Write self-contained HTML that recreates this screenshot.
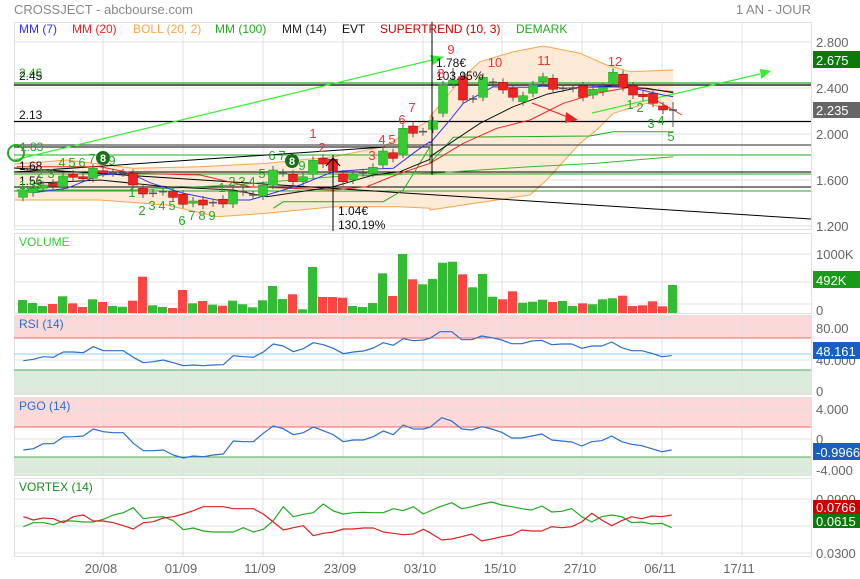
<!DOCTYPE html>
<html><head><meta charset="utf-8"><style>
html,body{margin:0;padding:0;background:#fff;width:860px;height:579px;overflow:hidden}
svg{display:block;font-family:"Liberation Sans",sans-serif}
</style></head><body>
<svg id="s" width="860" height="579" viewBox="0 0 860 579" xmlns="http://www.w3.org/2000/svg">
<rect width="860" height="579" fill="#fff"/>
<text x="14" y="14" font-size="13" fill="#888">CROSSJECT - abcbourse.com</text>
<text x="811" y="14" font-size="13" fill="#888" text-anchor="end">1 AN - JOUR</text>
<g id="g"></g>
</svg>
<script>
var g=document.getElementById('g'),h='';
function L(x1,y1,x2,y2,c,w){h+='<line x1="'+x1+'" y1="'+y1+'" x2="'+x2+'" y2="'+y2+'" stroke="'+c+'" stroke-width="'+(w||1)+'"/>';}
function R(x,y,w,hh,c,e){h+='<rect x="'+x+'" y="'+y+'" width="'+w+'" height="'+hh+'" fill="'+c+'" '+(e||'')+'/>';}
function T(x,y,t,c,s,a){h+='<text x="'+x+'" y="'+y+'" font-size="'+(s||12)+'" fill="'+c+'"'+(a?' text-anchor="'+a+'"':'')+'>'+t+'</text>';}
function cvt(a,ox,oy){return a.map(function(p){return [p[0]/3+ox,p[1]/3+oy]});}
function PP(a1,a2,c,w,oy){var pts=cvt(a1,0,oy||0).concat(cvt(a2,430,oy||0));var s=pts.map(function(p){return p[0].toFixed(1)+','+p[1].toFixed(1)}).join(' ');h+='<polyline points="'+s+'" fill="none" stroke="'+c+'" stroke-width="'+(w||1)+'" stroke-linejoin="round"/>';}
var VX=[103,183,263,343,423,502,582,662,742];
var panels=[[22,229],[233,313],[315,394],[397,475],[478,556]];
R(14,316,797,22,'#fdd8d8');R(14,370,797,24,'#dcecdc');
R(14,398,797,29,'#fdd8d8');R(14,457,797,18,'#dcecdc');
[42,88,134,180,226,254,282,304,328,360,392,409,439,470,499,526,553].forEach(function(y){L(14,y,811,y,'#e0e0e0');});
VX.forEach(function(x){panels.forEach(function(p){L(x,p[0],x,p[1],'#e0e0e0');});});
panels.forEach(function(p){h+='<rect x="14.5" y="'+(p[0]+.5)+'" width="797" height="'+(p[1]-p[0])+'" fill="none" stroke="#e0e0e0"/>';});
L(14,338,811,338,'#e66');L(14,370,811,370,'#5a5');L(14,354,811,354,'#8cf');
L(14,427,811,427,'#e66');L(14,457,811,457,'#5a5');
var bu1=[[45,492],[200,480],[400,505],[600,500],[800,490],[1000,470],[1150,440],[1290,360]],bu2=[[0,350],[100,230],[150,185],[250,155],[340,138],[450,160],[530,195],[600,215],[730,210]];
var bl1=[[45,600],[300,600],[500,615],[650,650],[800,640],[1000,620],[1200,620],[1290,625]],bl2=[[0,630],[200,600],[300,585],[350,540],[450,430],[500,390],[550,340],[650,310],[730,330]];
var up=cvt(bu1,0,0).concat(cvt(bu2,430,0)),lo=cvt(bl1,0,0).concat(cvt(bl2,430,0));
var poly=up.concat(lo.slice().reverse()).map(function(p){return p[0].toFixed(1)+','+p[1].toFixed(1)}).join(' ');
h+='<polygon points="'+poly+'" fill="#fdebd7"/>';
PP(bu1,bu2,'#f5a64a',1);PP(bl1,bl2,'#f5a64a',1);
L(14,83,811,83,'#2a2',1.2);L(14,85,811,85,'#000',1.2);L(14,121.5,811,121.5,'#000',1.2);
L(14,145,811,145,'#555',1.2);L(14,155,811,155,'#2a2',1);L(14,172,811,172,'#000',1);
L(14,174,811,174,'#2a2',1);L(14,187,811,187,'#000',1);L(14,191,811,191,'#2a2',1);
L(14,168,811,219,'#000',1);L(14,172,385,147,'#000',1);L(14,147,430,147,'#000',1);
L(14,160,432,60,'#3e3',1.2);h+='<polygon points="430,55 444,57 433,65" fill="#3e3"/>';
L(592,113,760,74,'#3e3',1.2);h+='<polygon points="760,69 771,71 761,79" fill="#3e3"/>';
L(532,103,570,118,'#e22',1.2);h+='<polygon points="566,112 578,120 565,123" fill="#e22"/>';
L(652,98,682,115,'#e22',1);
PP([[820,625],[850,605],[1150,605],[1210,570],[1290,440]],[[0,490],[70,412],[480,408],[550,395],[730,395]],'#2a2',1);
PP([[50,570],[400,570],[700,555],[1000,530],[1290,520]],[[0,520],[300,500],[500,490],[730,470]],'#3b3',1);
PP([[50,500],[300,500],[400,520],[600,525],[750,560],[1000,570],[1100,560],[1200,520],[1290,490]],[[0,490],[100,430],[200,385],[300,360],[400,310],[500,280],[600,262],[730,275]],'#e22',1);
PP([[100,550],[300,540],[500,560],[700,570],[800,590],[1000,560],[1120,525],[1200,515],[1290,478]],[[0,470],[60,430],[150,370],[250,320],[350,283],[450,262],[550,260],[650,265],[730,278]],'#111',1);
PP([[100,578],[200,565],[300,525],[390,520],[450,548],[550,580],[650,600],[750,600],[800,585],[900,555],[1000,515],[1100,508],[1180,505],[1260,445],[1290,425]],[[0,430],[60,360],[100,310],[190,260],[220,262],[300,262],[340,258],[400,265],[460,262],[540,258],[600,262],[700,285],[730,290]],'#33e',1);
var C=[['G',570,592],['G',565,578],['G',555,565],['R',550,558],['G',528,560],['R',522,532],['R',530,535],['G',505,535],['R',512,520],['X',518],['X',518],['R',520,555],['R',565,582],['X',580],['X',575],['R',575,592],['R',583,613],['G',603,610],['R',600,615],['X',608],['R',598,612],['G',575,612],['X',575],['X',585],['G',556,588],['G',510,556],['X',518],['R',523,545],['G',530,545],['G',481,523],['R',475,492],['R',478,512],['R',522,545],['G',522,540],['X',518],['G',502,520],['G',453,495],['R',458,475],['G',385,462],['R',378,400],['X',395],['G',362,388],
['G',255,340],['G',240,252],['R',230,300],['X',297],['G',232,292],['X',247],['R',247,270],['R',265,292],['G',287,305],['G',255,280],['G',230,245],['R',235,268],['X',265],['X',265],['R',258,292],['G',268,285],['G',262,275],['G',217,250],['R',223,262],['R',258,285],['R',283,290],['R',280,310],['R',318,330],['X',330]];
C.forEach(function(c,i){var x=23+10*i;var t=c[1]/3,b=(c[2]||c[1])/3;var wt=t-4,wb=b+4;if(i==65){wt=102;wb=127;}if(i==43){wt=68;}
L(x,wt.toFixed(1),x,wb.toFixed(1),'#555',1);
if(c[0]=='X'){L(x-4,t,x+4,t,'#555',1.5);}else{R(x-4.5,t.toFixed(1),9,Math.max(2,b-t).toFixed(1),c[0]=='G'?'#3c3':'#e22','stroke="'+(c[0]=='G'?'#292':'#a00')+'" stroke-width="0.5"');}});
L(333,155,333,231,'#000',1);h+='<polyline points="326,166 333,158 340,166" fill="none" stroke="#000"/>';
T(338,215,'1.04€','#111',12);T(338,229,'130.19%','#111',12);
L(432,22,432,175,'#000',1);L(420,172,445,172,'#000',1);
T(436,67,'1.78€','#111',12);T(436,80,'103.95%','#111',12);
T(19,77,'2.46','#2a2',12);T(19,80,'2.45','#111',12);T(19,119,'2.13','#111',12);
T(20,151,'1.83','#2a2',12);T(19,170,'1.68','#111',12);T(19,185,'1.56','#111',12);T(19,189,'1.55','#2a2',12);
h+='<circle cx="16" cy="153" r="8" fill="none" stroke="#2a2" stroke-width="2"/>';
h+='<circle cx="103" cy="158" r="7" fill="#1a6e1a"/><text x="103" y="162" font-size="11" font-weight="bold" fill="#fff" text-anchor="middle">8</text>';
h+='<circle cx="292" cy="161" r="7" fill="#1a6e1a"/><text x="292" y="165" font-size="11" font-weight="bold" fill="#fff" text-anchor="middle">8</text>';
var dg=[[40,178,'2'],[51,178,'3'],[62,167,'4'],[72,167,'5'],[82,167,'6'],[92,163,'7'],[112,165,'9'],[132,197,'1'],[142,215,'2'],[152,210,'3'],[162,210,'4'],[172,210,'5'],[182,225,'6'],[192,220,'7'],[202,220,'8'],[212,220,'9'],[222,192,'1'],[232,186,'2'],[242,186,'3'],[252,186,'4'],[262,178,'5'],[272,160,'6'],[282,160,'7'],[302,170,'9'],[630,109,'1'],[640,112,'2'],[651,128,'3'],[661,125,'4'],[671,141,'5']];
dg.forEach(function(d){T(d[0],d[1],d[2],'#2a2',13,'middle');});
var dr=[[313,138,'1'],[322,152,'2'],[372,160,'3'],[382,144,'4'],[392,144,'5'],[402,124,'6'],[412,112,'7'],[451,54,'9'],[441,78,'8'],[495,67,'10'],[544,65,'11'],[615,66,'12']];
dr.forEach(function(d){T(d[0],d[1],d[2],'#e33',13,'middle');});
var lg=[[19,'MM (7)','#33e'],[72,'MM (20)','#e22'],[133,'BOLL (20, 2)','#f5a64a'],[215,'MM (100)','#2a2'],[282,'MM (14)','#222'],[342,'EVT','#111'],[380,'SUPERTREND (10, 3)','#c00'],[516,'DEMARK','#2a2']];
lg.forEach(function(l){T(l[0],33,l[1],l[2],12);});
var V=[210,219,228,222,199,220,231,208,216,228,230,212,140,226,231,234,180,220,213,224,227,212,223,232,211,168,207,193,238,111,201,201,203,228,231,219,130,198,72,148,163,147,98,95,133,172,132,200,208,184,218,215,209,216,213,228,220,223,208,205,197,228,226,214,229,165];
V.forEach(function(v,i){var x=18+10*i,t=v/3+230;R(x,t.toFixed(1),9,(313-t).toFixed(1),C[i][0]=='R'?'#f44':'#3b3');});
T(19,246,'VOLUME','#3c3',12);
var r1=[[70,392],[100,388],[130,380],[160,382],[190,366],[220,366],[250,368],[280,350],[310,362],[340,362],[370,362],[400,382],[430,398],[460,395],[490,390],[520,398],[550,407],[580,405],[610,407],[640,405],[670,404],[700,377],[730,380],[760,382],[790,366],[820,342],[850,348],[880,365],[910,356],[940,338],[970,344],[1000,355],[1030,371],[1060,366],[1090,363],[1120,354],[1150,338],[1180,346],[1210,326],[1240,332],[1270,330]];
var r2=[[0,325],[30,305],[65,305],[95,329],[125,329],[155,318],[185,323],[215,330],[245,341],[275,341],[305,333],[335,331],[365,344],[395,342],[425,342],[455,355],[485,348],[515,348],[545,336],[575,353],[605,362],[635,362],[665,370],[695,380],[725,377]];
PP(r1,r2,'#2a6fd0',1.2,230);
T(19,328,'RSI (14)','#2a6fd0',12);
var p1=[[70,660],[100,656],[130,641],[160,641],[190,621],[220,620],[250,618],[280,597],[310,605],[340,608],[370,608],[400,640],[430,662],[460,662],[490,660],[520,675],[550,684],[580,678],[610,680],[640,675],[670,672],[700,633],[730,635],[760,635],[790,610],[820,588],[850,596],[880,614],[910,608],[940,591],[970,602],[1000,614],[1030,635],[1060,630],[1090,630],[1120,620],[1150,603],[1180,614],[1210,585],[1240,597],[1270,597]];
var p2=[[0,592],[35,563],[65,573],[95,597],[125,600],[155,590],[185,597],[215,607],[245,624],[275,624],[305,618],[335,612],[365,630],[395,633],[425,636],[455,648],[485,635],[515,632],[545,618],[575,635],[605,643],[635,647],[665,656],[695,665],[725,660]];
PP(p1,p2,'#2a6fd0',1.2,230);
T(19,410,'PGO (14)','#2a6fd0',12);
var vg1=[[70,890],[100,878],[130,878],[160,884],[190,873],[220,873],[250,876],[280,876],[310,868],[340,855],[370,848],[400,833],[430,866],[460,862],[490,860],[520,872],[550,899],[580,894],[610,903],[640,906],[670,906],[700,906],[730,893],[760,906],[790,898],[820,872],[850,830],[880,860],[910,853],[940,848],[970,822],[1000,843],[1030,852],[1060,848],[1090,847],[1120,848],[1150,848],[1180,836],[1210,842],[1240,830],[1270,852]];
var vg2=[[0,843],[30,830],[65,818],[95,836],[125,830],[155,822],[185,816],[215,825],[245,830],[275,836],[305,840],[335,828],[365,846],[395,844],[425,836],[455,860],[485,876],[515,860],[545,855],[575,860],[605,878],[635,876],[665,882],[695,880],[725,893]];
var vr1=[[70,860],[100,870],[130,864],[160,866],[190,878],[220,860],[250,855],[280,873],[310,873],[340,878],[370,887],[400,897],[430,878],[460,875],[490,864],[520,860],[550,852],[580,842],[610,830],[640,830],[670,830],[700,836],[730,836],[760,836],[790,852],[820,876],[850,900],[880,893],[910,887],[940,917],[970,910],[1000,906],[1030,897],[1060,897],[1090,894],[1120,894],[1150,906],[1180,910],[1210,914],[1240,912],[1270,898]];
var vr2=[[0,908],[35,930],[65,927],[95,920],[125,912],[155,933],[185,927],[215,920],[245,915],[275,900],[305,903],[335,903],[365,890],[395,893],[425,890],[455,876],[485,850],[515,870],[545,887],[575,872],[605,860],[635,866],[665,858],[695,860],[725,855]];
PP(vg1,vg2,'#2a2',1.2,230);PP(vr1,vr2,'#d22',1.2,230);
T(19,491,'VORTEX (14)','#1a8a1a',12);
[[47,'2.800'],[93,'2.400'],[139,'2.000'],[185,'1.600'],[231,'1.200'],[259,'1000K'],[315,'0'],[333,'80.00'],[365,'40.000'],[396,'0'],[414,'4.000'],[444,'0'],[475,'-4.000'],[504,'0.0900'],[558,'0.0300']].forEach(function(a){T(816,a[0],a[1],'#666',13);});
R(813,51,47,17,'#0a7a0a');T(816,65,'2.675','#fff',13);
R(813,102,47,16,'#666');T(816,115,'2.235','#fff',13);
R(813,271,47,17,'#1a9a1a');T(816,285,'492K','#fff',13);
R(813,342,47,17,'#1a5fc0');T(816,356,'48.161','#fff',13);
R(813,443,47,17,'#1a5fc0');T(816,457,'-0.9966','#fff',13);
R(813,500,47,14,'#c00');T(816,512,'0.0766','#fff',13);
R(813,514,47,14,'#0a7a0a');T(816,526,'0.0615','#fff',13);
[[101,'20/08'],[181,'01/09'],[260,'11/09'],[340,'23/09'],[420,'03/10'],[500,'15/10'],[580,'27/10'],[660,'06/11'],[739,'17/11']].forEach(function(d){T(d[0],573,d[1],'#666',13,'middle');});
g.innerHTML=h;
</script>
</body></html>
